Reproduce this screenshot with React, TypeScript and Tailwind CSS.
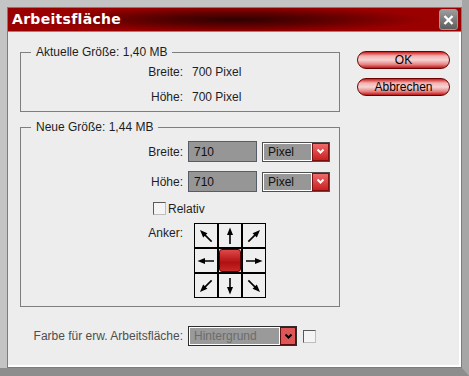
const font = { fontFamily: '"Liberation Sans", Arial, sans-serif' }

const Chevron = ({ color }: { color: string }) => (
  <svg width="9" height="7" viewBox="0 0 9 7">
    <polyline points="1.5,1.5 4.5,4.5 7.5,1.5" fill="none" stroke={color} strokeWidth="2" />
  </svg>
)

const Arrow = ({ rot }: { rot: string }) => (
  <svg width="20" height="20" viewBox="0 0 20 20" className={rot}>
    <line x1="10" y1="18" x2="10" y2="7" stroke="#000" strokeWidth="1.6" />
    <polygon points="10,1.5 13,9 7,9" fill="#000" />
  </svg>
)

const UnitSelect = () => (
  <div className="ml-[5px] flex h-[20px] w-[68px] border border-[#4e4e4e]">
    <div className="flex flex-1 items-center border border-white bg-[#979797] pl-[4px] text-[12px] text-[#111]">
      Pixel
    </div>
    <div className="flex w-[17px] items-center justify-center border border-[#7a1010] bg-[linear-gradient(to_bottom,#ee6a6a,#c82020)]">
      <Chevron color="#fff" />
    </div>
  </div>
)

const cells = ['-rotate-45', 'rotate-0', 'rotate-45', '-rotate-90', 'center', 'rotate-90', '-rotate-135', 'rotate-180', 'rotate-135']

export default function App() {
  return (
    <div
      className="flex h-[376px] w-[469px] flex-col border-r-[7px] border-b-[8px] border-r-[#a6a6a6] border-b-[#8d8d8d] bg-[#c4c4c4] pt-[7px] pl-[7px] text-[#1e1e1e]"
      style={font}
    >
      <div className="flex flex-1 flex-col border border-[#7c7c7c]">
        <div className="flex h-[24px] items-center justify-between border-b border-[#8a8a8a] bg-[radial-gradient(ellipse_42%_55%_at_50%_50%,#2e0000_0%,#5a0000_45%,#9a0000_100%)] pr-[3px] pl-[4px]">
          <span
            className="text-[14px] font-bold tracking-[0.3px] text-white"
            style={{ fontFamily: '"DejaVu Sans", Verdana, sans-serif' }}
          >
            Arbeitsfläche
          </span>
          <div className="flex h-[21px] w-[19px] items-center justify-center rounded-[3px] border border-[#9a9a9a] bg-[linear-gradient(to_bottom,#9c9c9c,#5e5e5e)]">
            <svg width="11" height="10" viewBox="0 0 11 10">
              <path d="M1.5 1 L9.5 9 M9.5 1 L1.5 9" stroke="#fff" strokeWidth="2.4" />
            </svg>
          </div>
        </div>

        <div className="flex flex-1 border-r-2 border-b-2 border-r-white border-b-white bg-[#ededed] pt-[13px] pl-[12px] text-[12px]">
          <div className="flex w-[320px] flex-col">
            <fieldset className="border border-[#7e7e7e] pb-[2px]">
              <legend className="ml-[10px] px-[5px] leading-[14px]">Aktuelle Größe: 1,40 MB</legend>
              <div className="flex h-[25px] items-center">
                <span className="w-[162px] text-right">Breite:</span>
                <span className="ml-[9px]">700 Pixel</span>
              </div>
              <div className="flex h-[25px] items-center">
                <span className="w-[162px] text-right">Höhe:</span>
                <span className="ml-[9px]">700 Pixel</span>
              </div>
            </fieldset>

            <fieldset className="mt-[8px] border border-[#7e7e7e] pt-[7px] pb-[8px]">
              <legend className="ml-[10px] px-[5px] leading-[14px]">Neue Größe: 1,44 MB</legend>
              <div className="flex h-[21px] items-center">
                <span className="w-[162px] text-right">Breite:</span>
                <div className="ml-[5px] flex h-[21px] w-[69px] items-center border border-[#565d66] bg-[#969696] pl-[5px] text-[#111]">710</div>
                <UnitSelect />
              </div>
              <div className="mt-[9px] flex h-[21px] items-center">
                <span className="w-[162px] text-right">Höhe:</span>
                <div className="ml-[5px] flex h-[21px] w-[69px] items-center border border-[#565d66] bg-[#969696] pl-[5px] text-[#111]">710</div>
                <UnitSelect />
              </div>
              <div className="mt-[10px] flex h-[13px] items-center pl-[132px]">
                <div className="h-[13px] w-[13px] border border-t-[#5a5a5a] border-l-[#5a5a5a] border-r-[#bdbdbd] border-b-[#bdbdbd] bg-[#f4f4f4]" />
                <span className="ml-[2px]">Relativ</span>
              </div>
              <div className="mt-[8px] flex">
                <span className="w-[162px] pt-[1px] text-right">Anker:</span>
                <div className="ml-[11px] grid w-[72px] grid-cols-3">
                  {cells.map((c) =>
                    c === 'center' ? (
                      <div key={c} className="h-[25px] w-[24px] border border-black bg-[#ededed] p-0">
                        <div className="h-full w-full rounded-[3px] border border-[#5a0000] bg-[linear-gradient(to_bottom,#e04848,#b01010_60%,#c82828)]" />
                      </div>
                    ) : (
                      <div key={c} className="flex h-[25px] w-[24px] items-center justify-center border border-black bg-[#efefef]">
                        <Arrow rot={c} />
                      </div>
                    )
                  )}
                </div>
              </div>
            </fieldset>

            <div className="mt-[19px] flex h-[20px] items-center">
              <span className="w-[163px] text-right text-[#4e4e4e]">Farbe für erw. Arbeitsfläche:</span>
              <div className="ml-[5px] flex h-[20px] w-[109px] border border-[#2c2c2c]">
                <div className="flex flex-1 items-center border border-white bg-[#9a9a9a] pl-[4px] text-[#6c6c6c]">Hintergrund</div>
                <div className="flex w-[16px] items-center justify-center border border-[#5a1010] bg-[#e05555]">
                  <Chevron color="#000" />
                </div>
              </div>
              <div className="ml-[6px] h-[13px] w-[13px] border border-t-[#5a5a5a] border-l-[#5a5a5a] border-r-[#bdbdbd] border-b-[#bdbdbd] bg-[#f4f4f4]" />
            </div>
          </div>

          <div className="ml-[17px] flex flex-col gap-[9px] pt-[6px]">
            {['OK', 'Abbrechen'].map((t) => (
              <div
                key={t}
                className="flex h-[18px] w-[93px] items-center justify-center rounded-full border border-[#6e0000] bg-[linear-gradient(to_bottom,#c42020_0%,#f6b0b0_25%,#f4d4d4_50%,#e88080_78%,#b81818_100%)] text-[12px] text-black"
              >
                {t}
              </div>
            ))}
          </div>
        </div>
      </div>
    </div>
  )
}
